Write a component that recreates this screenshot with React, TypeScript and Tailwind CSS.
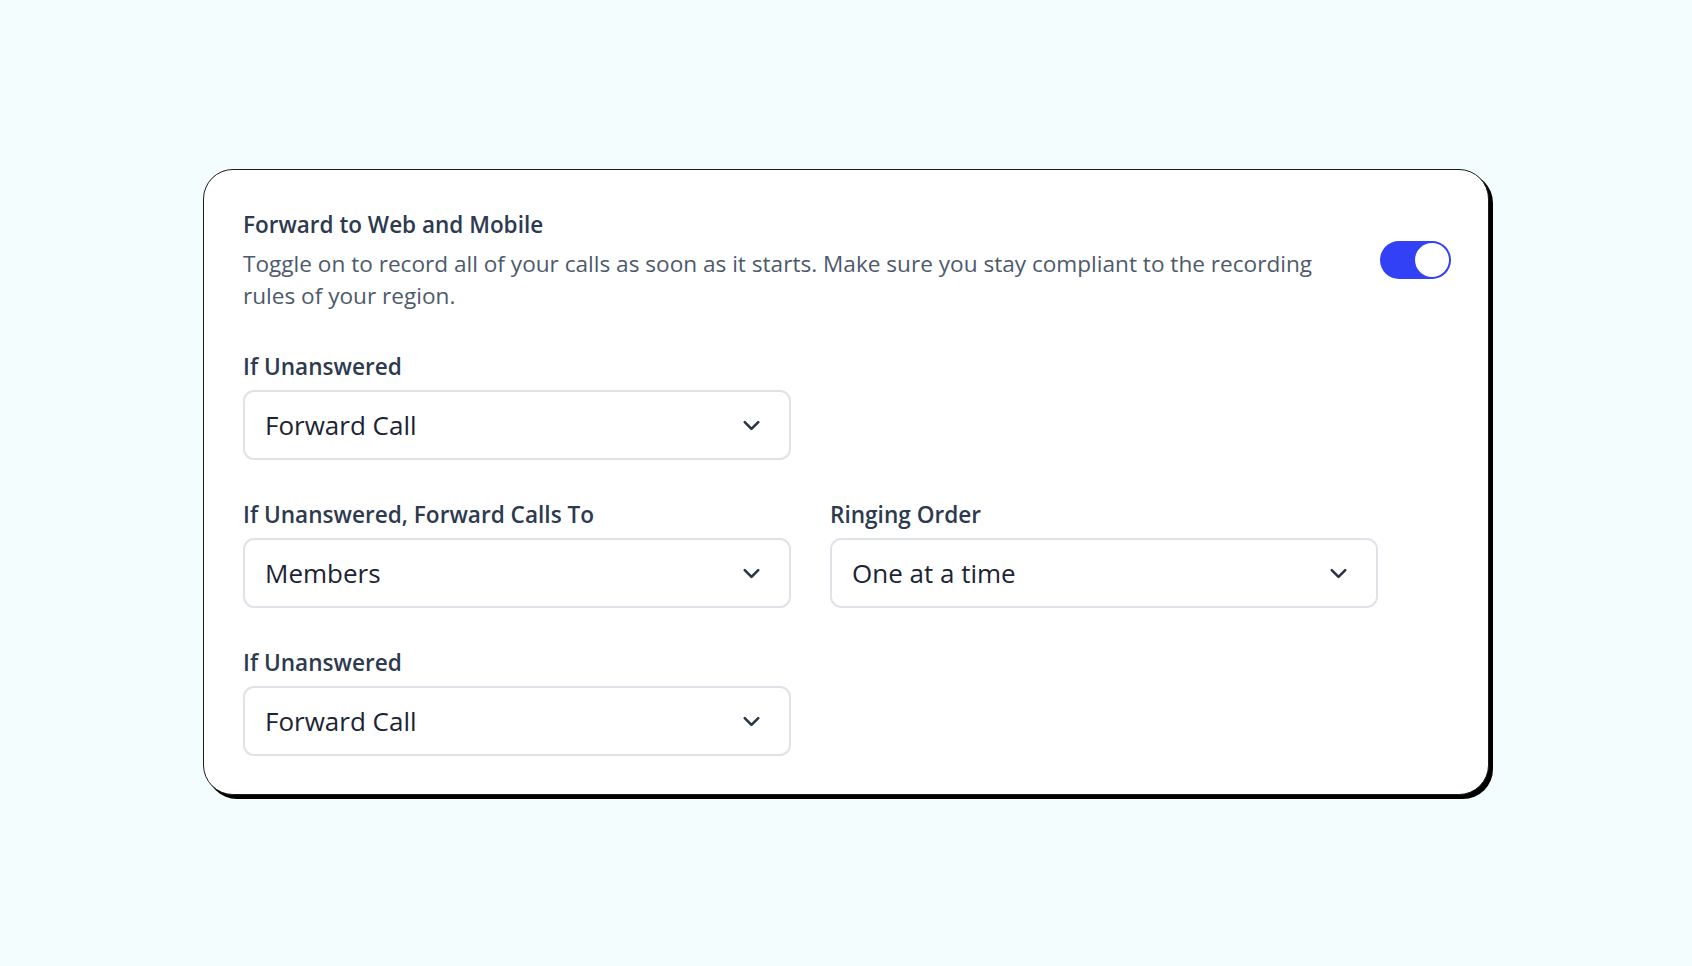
import { ChevronDown } from 'lucide-react';

// Single select-looking field: label above, value + chevron in a bordered box.
function SelectField({ label, value }: { label: string; value: string }) {
  return (
    <div className="w-[548px]">
      <div className="mb-[9px] text-[22.6px] font-semibold leading-[28px] text-[#2d3a4f]">{label}</div>
      <div className="flex h-[70px] items-center justify-between rounded-[11px] border-2 border-[#dfe2e7] bg-white pl-[20px] pr-[24px]">
        <span className="text-[26px] leading-none text-[#1c2433]">{value}</span>
        <ChevronDown size={27} strokeWidth={2.3} className="text-[#2b3648]" />
      </div>
    </div>
  );
}

export default function App() {
  return (
    <div
      className="flex min-h-screen items-start justify-center bg-[#f3fdfd] pt-[169px]"
      style={{ fontFamily: '"Open Sans", "Noto Sans", sans-serif' }}
    >
      <div className="w-[1286px] rounded-[30px] border border-[#1b1b1b] bg-white px-[39px] pb-[38px] pt-[40px] shadow-[4px_4px_0_0_#000]">
        <div className="flex items-center justify-between">
          <div className="w-[1100px]">
            <div className="text-[22.5px] font-semibold leading-[30px] text-[#2d3a4f]">Forward to Web and Mobile</div>
            <p className="mt-[8px] text-[22.6px] leading-[32px] text-[#4d5a6c]">
              Toggle on to record all of your calls as soon as it starts. Make sure you stay compliant to the recording
              rules of your region.
            </p>
          </div>
          <div className="mr-[-2px] mt-[-2px] flex h-[38px] w-[71px] items-center justify-end rounded-full bg-[#3341f6] p-[2px]">
            <div className="h-[34px] w-[34px] rounded-full bg-white" />
          </div>
        </div>

        <div className="mt-[41px] flex flex-col gap-[41px]">
          <SelectField label="If Unanswered" value="Forward Call" />
          <div className="flex gap-[39px]">
            <SelectField label="If Unanswered, Forward Calls To" value="Members" />
            <SelectField label="Ringing Order" value="One at a time" />
          </div>
          <SelectField label="If Unanswered" value="Forward Call" />
        </div>
      </div>
    </div>
  );
}
